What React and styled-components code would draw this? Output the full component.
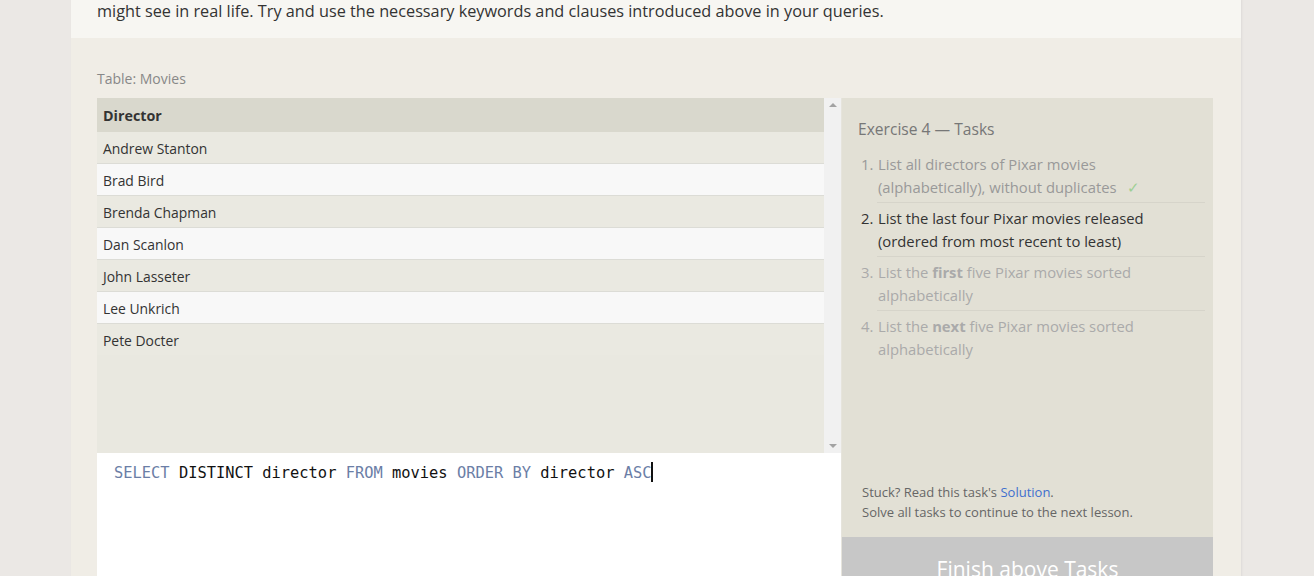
import React from "react";
import styled, { createGlobalStyle } from "styled-components";

const Global = createGlobalStyle`
  html, body { margin: 0; padding: 0; background: #ebe8e5; }
  body { font-family: "Open Sans", "Noto Sans", sans-serif; color: #333; overflow: hidden; }
`;

const Card = styled.div`
  width: 1170px;
  margin-left: 71px;
  background: #f0ede6;
  box-shadow: 1px 0 2px rgba(0,0,0,0.06);
`;

const Intro = styled.div`
  background: #f7f6f2;
  padding: 0 26px 15px;
  height: 24px;
`;

const IntroText = styled.p`
  margin: -1px 0 0;
  font-size: 16.25px;
  line-height: 24px;
  color: #333;
`;

const Body = styled.div`
  padding: 30px 28px 0 26px;
`;

const Caption = styled.div`
  font-size: 14px;
  color: #888;
  line-height: 22px;
  margin-bottom: 8px;
`;

const Exercise = styled.div`
  display: grid;
  grid-template-columns: 744px 372px;
`;

const LeftCol = styled.div`
  display: flex;
  flex-direction: column;
`;

const TableWrap = styled.div`
  height: 355px;
  display: flex;
  background: #e9e8e0;
`;

const TableArea = styled.div`
  flex: 1;
  display: flex;
  flex-direction: column;
`;

const HeadRow = styled.div`
  height: 34px;
  display: flex;
  align-items: center;
  padding-left: 6px;
  background: #d9d8cd;
  font-weight: 700;
  font-size: 14.3px;
  color: #333;
`;

const Row = styled.div`
  height: 29px;
  padding-top: 2px;
  display: flex;
  align-items: center;
  padding-left: 6px;
  font-size: 13.9px;
  color: #333;
  background: ${p => (p.$alt ? "#f8f8f8" : "#eae9e1")};
  border-bottom: ${p => (p.$last ? "none" : "1px solid #dcdcd6")};
`;

const Scrollbar = styled.div`
  width: 17px;
  background: #f1f1f1;
  display: flex;
  flex-direction: column;
  justify-content: space-between;
  align-items: center;
  padding: 5px 0;
  box-sizing: border-box;
`;

const Arrow = styled.div`
  width: 0;
  height: 0;
  border-left: 4px solid transparent;
  border-right: 4px solid transparent;
  ${p => (p.$down ? "border-top: 4px solid #a3a3a3;" : "border-bottom: 4px solid #a3a3a3;")}
`;

const Editor = styled.div`
  background: #fff;
  height: 140px;
  padding: 9px 17px;
  font-family: "DejaVu Sans Mono", "Liberation Mono", monospace;
  font-size: 15.4px;
  line-height: 22px;
  color: #111;
  white-space: pre;
`;

const Kw = styled.span`
  color: #6b7ea6;
`;

const Cursor = styled.span`
  display: inline-block;
  width: 2px;
  height: 20px;
  background: #111;
  vertical-align: -4px;
  margin-left: -1px;
`;

const RightCol = styled.div`
  display: flex;
  flex-direction: column;
  background: #e2e0d5;
  border-left: 1px solid #e6e4dc;
`;

const Tasks = styled.div`
  height: 439px;
  padding: 18px 8px 0 16px;
  box-sizing: border-box;
  display: flex;
  flex-direction: column;
`;

const TasksTitle = styled.div`
  font-size: 15.6px;
  line-height: 26px;
  color: #777;
  margin-bottom: 11px;
`;

const TaskList = styled.ol`
  margin: 0;
  padding: 0;
  list-style: none;
`;

const Task = styled.li`
  display: flex;
  font-size: 14.8px;
  line-height: 22.5px;
  color: ${p => p.$color};
  padding: 0 0 5px 3px;
  position: relative;
  & + & { padding-top: 4px; }
  &:not(:last-child)::after {
    content: "";
    position: absolute;
    left: 19px;
    right: 0;
    bottom: 0;
    border-bottom: 1px solid #d6d4ca;
  }
`;

const Num = styled.span`
  width: 17px;
  flex: none;
`;

const TaskText = styled.span`
  b { font-weight: 700; }
`;

const Check = styled.span`
  color: #9dcf94;
  margin-left: 10px;
`;

const Help = styled.div`
  margin-top: auto;
  padding: 0 0 15px 4px;
  font-size: 13px;
  line-height: 20px;
  color: #666;
  a { color: #3e6fce; text-decoration: none; }
`;

const Finish = styled.div`
  background: #c7c7c7;
  color: #fff;
  font-size: 21px;
  line-height: 32px;
  text-align: center;
  padding: 16px 0;
`;

const directors = [
  "Andrew Stanton",
  "Brad Bird",
  "Brenda Chapman",
  "Dan Scanlon",
  "John Lasseter",
  "Lee Unkrich",
  "Pete Docter",
];

export default function App() {
  return (
    <>
      <Global />
      <Card>
        <Intro>
          <IntroText>
            might see in real life. Try and use the necessary keywords and clauses introduced above in your queries.
          </IntroText>
        </Intro>
        <Body>
          <Caption>Table: Movies</Caption>
          <Exercise>
            <LeftCol>
              <TableWrap>
                <TableArea>
                  <HeadRow>Director</HeadRow>
                  {directors.map((d, i) => (
                    <Row key={d} $alt={i % 2 === 1} $last={i === directors.length - 1}>
                      {d}
                    </Row>
                  ))}
                </TableArea>
                <Scrollbar>
                  <Arrow />
                  <Arrow $down />
                </Scrollbar>
              </TableWrap>
              <Editor>
                <Kw>SELECT</Kw> DISTINCT director <Kw>FROM</Kw> movies <Kw>ORDER BY</Kw> director <Kw>ASC</Kw>
                <Cursor />
              </Editor>
            </LeftCol>
            <RightCol>
              <Tasks>
                <TasksTitle>Exercise 4 — Tasks</TasksTitle>
                <TaskList>
                  <Task $color="#999">
                    <Num>1.</Num>
                    <TaskText>
                      List all directors of Pixar movies (alphabetically), without duplicates
                      <Check>✓</Check>
                    </TaskText>
                  </Task>
                  <Task $color="#333">
                    <Num>2.</Num>
                    <TaskText>List the last four Pixar movies released (ordered from most recent to least)</TaskText>
                  </Task>
                  <Task $color="#aaa">
                    <Num>3.</Num>
                    <TaskText>
                      List the <b>first</b> five Pixar movies sorted alphabetically
                    </TaskText>
                  </Task>
                  <Task $color="#aaa">
                    <Num>4.</Num>
                    <TaskText>
                      List the <b>next</b> five Pixar movies sorted alphabetically
                    </TaskText>
                  </Task>
                </TaskList>
                <Help>
                  Stuck? Read this task's <a href="#">Solution</a>.
                  <br />
                  Solve all tasks to continue to the next lesson.
                </Help>
              </Tasks>
              <Finish>Finish above Tasks</Finish>
            </RightCol>
          </Exercise>
        </Body>
      </Card>
    </>
  );
}
